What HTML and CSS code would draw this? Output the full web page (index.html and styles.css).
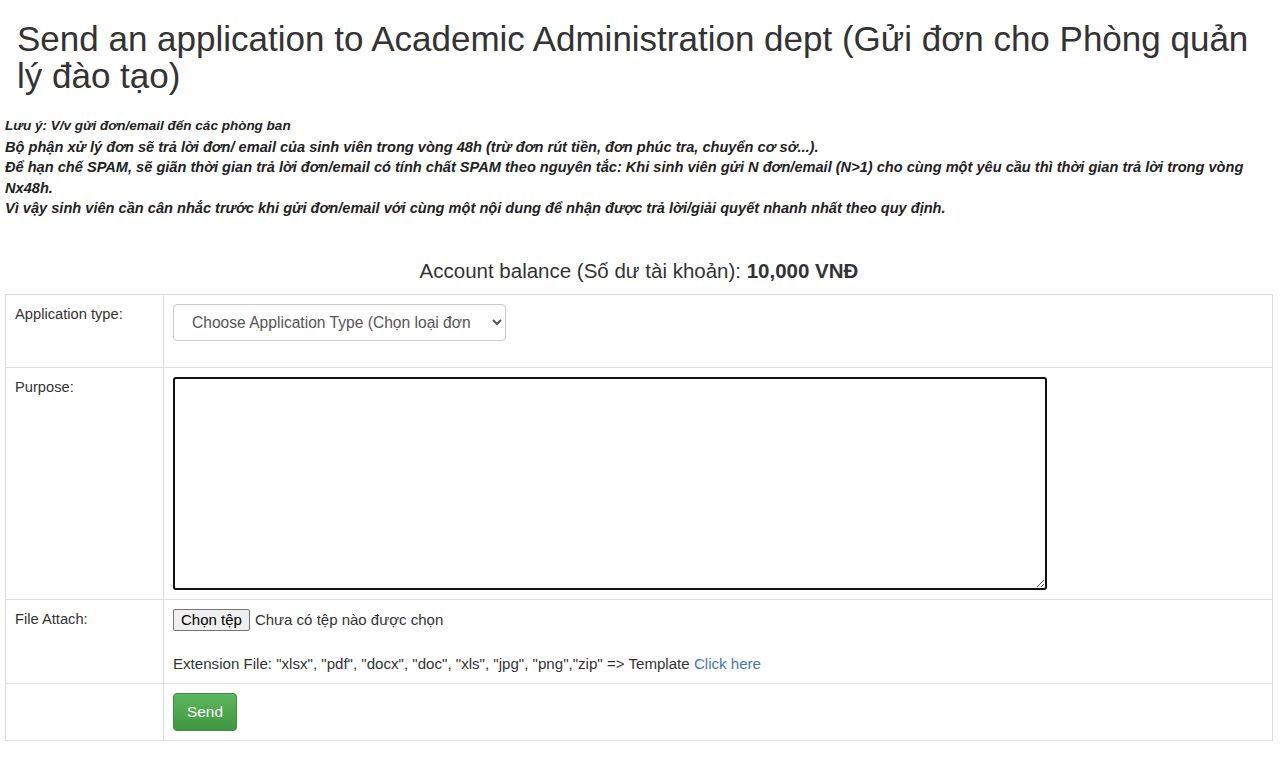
FILE: index.html
```html
<!DOCTYPE html>
<html lang="vi">
<head>
<meta charset="utf-8">
<title>Send an application</title>
<link rel="stylesheet" href="styles.css">
</head>
<body>
<div class="page">
  <h1 class="title">Send an application to Academic Administration dept (Gửi đơn cho Phòng quản lý đào tạo)</h1>
  <div class="notes">
    <div class="note-head">Lưu ý: V/v gửi đơn/email đến các phòng ban</div>
    <div>Bộ phận xử lý đơn sẽ trả lời đơn/ email của sinh viên trong vòng 48h (trừ đơn rút tiền, đơn phúc tra, chuyển cơ sở...).</div>
    <div>Để hạn chế SPAM, sẽ giãn thời gian trả lời đơn/email có tính chất SPAM theo nguyên tắc: Khi sinh viên gửi N đơn/email (N&gt;1) cho cùng một yêu cầu thì thời gian trả lời trong vòng Nx48h.</div>
    <div>Vì vậy sinh viên cần cân nhắc trước khi gửi đơn/email với cùng một nội dung để nhận được trả lời/giải quyết nhanh nhất theo quy định.</div>
  </div>
  <div class="balance">Account balance (Số dư tài khoản): <b>10,000 VNĐ</b></div>
  <table class="form-table">
    <tr class="row-type">
      <td class="label">Application type:</td>
      <td class="field">
        <select class="select">
          <option>Choose Application Type (Chọn loại đơn)</option>
        </select>
      </td>
    </tr>
    <tr class="row-purpose">
      <td class="label">Purpose:</td>
      <td class="field"><textarea class="textarea" autofocus></textarea></td>
    </tr>
    <tr class="row-file">
      <td class="label">File Attach:</td>
      <td class="field">
        <div class="file-line"><button class="file-btn" type="button">Chọn tệp</button><span class="file-status">Chưa có tệp nào được chọn</span></div>
        <div class="ext">Extension File: "xlsx", "pdf", "docx", "doc", "xls", "jpg", "png","zip" =&gt; Template <a href="#" class="link">Click here</a></div>
      </td>
    </tr>
    <tr class="row-send">
      <td class="label"></td>
      <td class="field"><button class="send-btn" type="button">Send</button></td>
    </tr>
  </table>
</div>
</body>
</html>
```

FILE: styles.css
```css
html, body {
  margin: 0;
  padding: 0;
  background: #fff;
}

body {
  font-family: "Liberation Sans", Arial, Helvetica, sans-serif;
  color: #333;
}

.page {
  width: 1268px;
  padding: 0 7px 0 5px;
}

.title {
  margin: 0;
  padding: 20px 0 0 12px;
  font-size: 35px;
  font-weight: normal;
  line-height: 37px;
  color: #333;
}

.notes {
  margin-top: 22px;
  font-size: 14.6px;
  line-height: 20.5px;
  font-weight: bold;
  font-style: italic;
  color: #222;
}

.note-head {
  font-size: 13.5px;
}

.balance {
  margin-top: 40px;
  text-align: center;
  font-size: 20.5px;
  line-height: 23px;
  color: #333;
}

.balance b {
  font-weight: bold;
}

.form-table {
  width: 1268px;
  margin-top: 12px;
  border-collapse: collapse;
  font-size: 14.7px;
}

.form-table td {
  border: 1px solid #ddd;
  padding: 9px;
  vertical-align: top;
  line-height: 21px;
}

.form-table td.label {
  width: 139px;
  color: #333;
}

.select {
  display: block;
  width: 333px;
  height: 37px;
  margin: 0 0 17px 0;
  padding: 0 19px 0 14px;
  font-family: "Liberation Sans", Arial, sans-serif;
  font-size: 15.6px;
  color: #555;
  background: #fff;
  border: 1px solid #ccc;
  border-radius: 4px;
  box-shadow: inset 0 1px 1px rgba(0, 0, 0, 0.04);
}

.textarea {
  display: block;
  box-sizing: border-box;
  width: 874px;
  height: 213px;
  margin: 0;
  padding: 2px 3px;
  border: 2px solid #111;
  border-radius: 3px;
  font-family: "Liberation Sans", Arial, sans-serif;
  font-size: 14px;
  outline: none;
}

.file-line {
  display: flex;
  align-items: center;
  gap: 5px;
  height: 22px;
}

.file-btn {
  box-sizing: border-box;
  height: 22px;
  padding: 0 7px;
  font-family: "Liberation Sans", Arial, sans-serif;
  font-size: 15px;
  line-height: 20px;
  color: #000;
  background: #efefef;
  border: 1px solid #767676;
  border-radius: 2px;
}

.file-status {
  font-size: 15px;
  color: #333;
}

.ext {
  margin-top: 22px;
  font-size: 15.1px;
  color: #333;
}

.link {
  color: #3f7ab8;
  text-decoration: none;
}

.send-btn {
  box-sizing: border-box;
  height: 38px;
  padding: 0 13px;
  font-family: "Liberation Sans", Arial, sans-serif;
  font-size: 15.4px;
  color: #fff;
  background: linear-gradient(to bottom, #5cb85c 0%, #419641 100%);
  border: 1px solid #3e8f3e;
  border-radius: 4px;
  display: block;
}
```
